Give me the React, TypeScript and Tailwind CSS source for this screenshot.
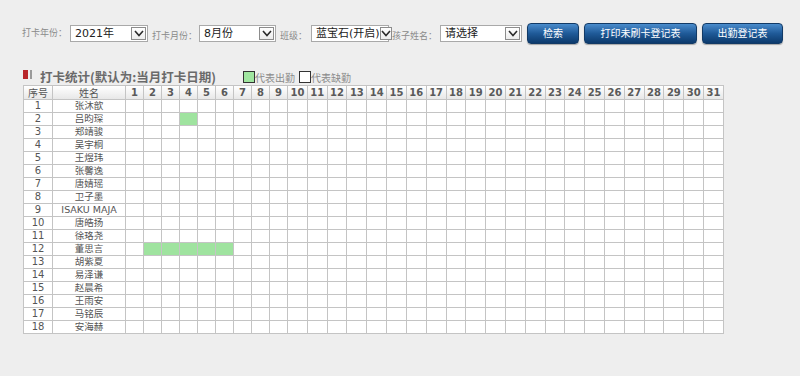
import React from 'react';

const cjk = "font-['Noto_Sans_CJK_SC',sans-serif]";
const mixed = "font-['DejaVu_Sans','Noto_Sans_CJK_SC',sans-serif]";

const students = [
  '张沐歆', '吕昀琛', '郑靖骏', '吴宇桐', '王煜玮', '张馨逸', '唐婧瑶', '卫子墨', 'ISAKU MAJA',
  '唐皓扬', '徐珞尧', '董思言', '胡紫夏', '易泽谦', '赵晨希', '王雨安', '马铭辰', '安海赫',
];

// attended days per row (index = row number - 1)
const attended: Record<number, number[]> = {
  1: [4],
  11: [2, 3, 4, 5, 6],
};

const days = Array.from({ length: 31 }, (_, i) => i + 1);

const Chevron = () => (
  <svg width="10" height="7" viewBox="0 0 10 7">
    <polyline points="1,1 5,5.5 9,1" fill="none" stroke="#2b2b2b" strokeWidth="1.6" />
  </svg>
);

const FakeSelect = ({ value, width }: { value: string; width: string }) => (
  <div className={`${width} h-[17px] bg-white border border-[#a9a9a9] flex items-center justify-between pl-[4px] pr-[1px]`}>
    <span className={`${mixed} text-[11px] text-[#222] leading-none whitespace-nowrap`}>{value}</span>
    <div className="w-[15px] h-[13px] border border-[#8c8c8c] bg-gradient-to-b from-white to-[#ececec] flex items-center justify-center">
      <Chevron />
    </div>
  </div>
);

const Label = ({ children }: { children: React.ReactNode }) => (
  <span className={`${cjk} text-[9px] text-[#8a8a8a] whitespace-nowrap`}>{children}</span>
);

const BlueButton = ({ children, width }: { children: React.ReactNode; width: string }) => (
  <button
    className={`${width} h-[21px] rounded-[4px] border border-[#123a66] bg-gradient-to-b from-[#4a8ccc] via-[#1f5a98] to-[#0c3a6c] text-white ${cjk} text-[10px] leading-none shadow-[0_1px_1px_rgba(0,0,0,0.3)]`}
  >
    {children}
  </button>
);

export default function App() {
  return (
    <div className="w-[800px] h-[376px] bg-[#eeeeee] overflow-hidden">
      {/* Filter bar */}
      <div className="flex items-center pt-[21px] pl-[22px]">
        <Label>打卡年份：</Label>
        <div className="ml-[3px]"><FakeSelect value="2021年" width="w-[78px]" /></div>
        <div className="ml-[4px]"><Label>打卡月份：</Label></div>
        <div className="ml-[2px]"><FakeSelect value="8月份" width="w-[77px]" /></div>
        <div className="ml-[4px]"><Label>班级：</Label></div>
        <div className="ml-[4px]"><FakeSelect value="蓝宝石(开启)" width="w-[78px]" /></div>
        <div className="ml-[3px]"><Label>孩子姓名：</Label></div>
        <div className="ml-[3px]"><FakeSelect value="请选择" width="w-[82px]" /></div>
        <div className="ml-[5px] flex gap-[5px]">
          <BlueButton width="w-[52px]">检索</BlueButton>
          <BlueButton width="w-[113px]">打印未刷卡登记表</BlueButton>
          <BlueButton width="w-[81px]">出勤登记表</BlueButton>
        </div>
      </div>

      {/* Title + legend */}
      <div className="flex items-end pl-[23px] mt-[21px] h-[17px]">
        <div className="flex items-center gap-[2px] self-center">
          <div className="w-[5px] h-[9px] bg-[#b8262a]" />
          <div className="w-[2px] h-[9px] bg-[#9a9a9a]" />
        </div>
        <span className={`${cjk} ml-[8px] text-[12.5px] font-bold text-[#6a6a6a] leading-none`}>
          打卡统计(默认为:当月打卡日期)
        </span>
        <div className="ml-[27px] flex items-end">
          <div className="w-[12px] h-[12px] bg-[#a0e6a0] border border-[#333]" />
          <span className={`${cjk} text-[10px] text-[#8a8a8a] leading-none`}>代表出勤</span>
          <div className="ml-[4px] w-[12px] h-[12px] bg-white border border-[#333]" />
          <span className={`${cjk} text-[10px] text-[#8a8a8a] leading-none`}>代表缺勤</span>
        </div>
      </div>

      {/* Attendance table */}
      <div className="pl-[23px] mt-[2px]">
        <table className="table-fixed border-collapse w-[701px] bg-white">
          <colgroup>
            <col className="w-[29px]" />
            <col className="w-[73px]" />
            {days.map((d) => (
              <col key={d} className={d < 10 ? 'w-[18px]' : ''} />
            ))}
          </colgroup>
          <thead>
            <tr className="h-[14px] bg-gradient-to-b from-white to-[#e6e6e6]">
              <th className={`border border-[#c4c4c4] ${cjk} text-[10px] font-normal text-[#555] leading-none p-0`}>序号</th>
              <th className={`border border-[#c4c4c4] ${cjk} text-[10px] font-normal text-[#555] leading-none p-0`}>姓名</th>
              {days.map((d) => (
                <th
                  key={d}
                  className="border border-[#c4c4c4] font-['DejaVu_Sans',sans-serif] text-[10px] font-bold text-[#5a5a5a] leading-none p-0"
                >
                  {d}
                </th>
              ))}
            </tr>
          </thead>
          <tbody>
            {students.map((name, i) => (
              <tr key={i} className="h-[13px]">
                <td className="border border-[#c4c4c4] text-center font-['DejaVu_Sans',sans-serif] text-[10px] text-[#555] leading-none p-0">
                  {i + 1}
                </td>
                <td className={`border border-[#c4c4c4] text-center ${mixed} text-[9.5px] text-[#555] leading-none p-0 whitespace-nowrap`}>
                  {name}
                </td>
                {days.map((d) => (
                  <td
                    key={d}
                    className={`border border-[#c4c4c4] p-0 ${attended[i]?.includes(d) ? 'bg-[#9fe39f]' : ''}`}
                  />
                ))}
              </tr>
            ))}
          </tbody>
        </table>
      </div>
    </div>
  );
}
